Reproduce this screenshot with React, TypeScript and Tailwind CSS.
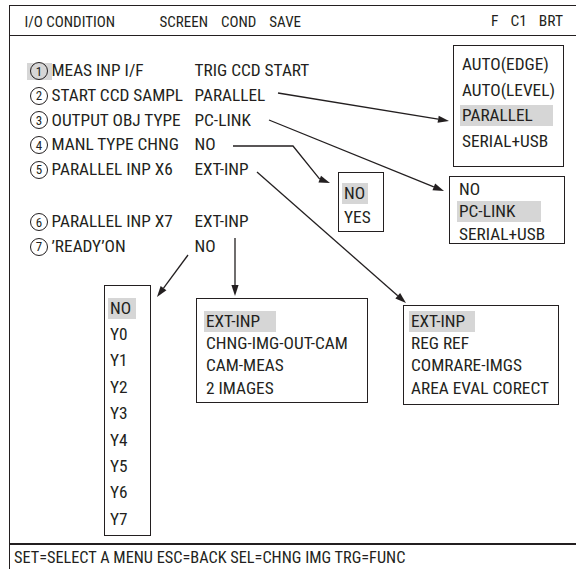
import React from "react";

type Opt = { text: string; on?: boolean };

const ROWS_TOP = [
  { n: "1", label: "MEAS INP I/F", value: "TRIG CCD START", mark: true },
  { n: "2", label: "START CCD SAMPL", value: "PARALLEL" },
  { n: "3", label: "OUTPUT OBJ TYPE", value: "PC-LINK" },
  { n: "4", label: "MANL TYPE CHNG", value: "NO" },
  { n: "5", label: "PARALLEL INP X6", value: "EXT-INP" },
];

const ROWS_BOTTOM = [
  { n: "6", label: "PARALLEL INP X7", value: "EXT-INP" },
  { n: "7", label: "’READY’ON", value: "NO" },
];

function Row({ n, label, value, mark }: { n: string; label: string; value: string; mark?: boolean }) {
  return (
    <div className="flex h-[24.6px] items-center">
      <span className={`flex h-[17px] w-[25px] items-center justify-center ${mark ? "bg-[#d6d6d6]" : ""}`}>
        <span className="flex h-[18px] w-[18px] items-center justify-center rounded-full border-[1.2px] border-[#231f20] text-[13px] leading-none">
          {n}
        </span>
      </span>
      <span className="w-[143px] whitespace-nowrap">{label}</span>
      <span className="whitespace-nowrap">{value}</span>
    </div>
  );
}

function Menu({
  items,
  className,
  rowH,
  hlW,
}: {
  items: Opt[];
  className: string;
  rowH: string;
  hlW: string;
}) {
  return (
    <div className={`absolute border-[1.5px] border-[#231f20] bg-white ${className}`}>
      {items.map((it) => (
        <div key={it.text} className={`flex items-center whitespace-nowrap ${rowH}`}>
          <span className={`px-[2px] leading-[21px] ${it.on ? `bg-[#d6d6d6] ${hlW}` : ""}`}>{it.text}</span>
        </div>
      ))}
    </div>
  );
}

function Arrow({ x1, y1, x2, y2, pts }: { x1: number; y1: number; x2: number; y2: number; pts?: string }) {
  const a = Math.atan2(y2 - y1, x2 - x1);
  const len = 11;
  const w = 3.6;
  const bx = x2 - len * Math.cos(a);
  const by = y2 - len * Math.sin(a);
  const p1 = `${bx + w * Math.sin(a)},${by - w * Math.cos(a)}`;
  const p2 = `${bx - w * Math.sin(a)},${by + w * Math.cos(a)}`;
  return (
    <g>
      <polyline
        points={pts ? `${pts} ${bx},${by}` : `${x1},${y1} ${bx},${by}`}
        fill="none"
        stroke="#231f20"
        strokeWidth="1.3"
      />
      <polygon points={`${x2},${y2} ${p1} ${p2}`} fill="#231f20" />
    </g>
  );
}

export default function App() {
  return (
    <div className="relative h-[569px] w-[576px] overflow-hidden bg-white pl-[9px] pt-[5px] font-['Roboto',sans-serif] text-[17.3px] text-[#231f20] [font-stretch:condensed]">
      <div className="flex h-[620px] w-[620px] flex-col border-l-[1.5px] border-t-[1.5px] border-[#231f20]">
        <div className="h-[30px] border-b-[1.2px] border-[#231f20] pt-[3px]">
          <div className="flex h-full w-[553px] items-center text-[15px]">
            <span className="ml-[14.5px] w-[135px]">I/O CONDITION</span>
            <span className="flex gap-[13px]">
              <span>SCREEN</span>
              <span>COND</span>
              <span>SAVE</span>
            </span>
            <span className="ml-auto flex gap-[12px] text-[15.5px]">
              <span>F</span>
              <span>C1</span>
              <span>BRT</span>
            </span>
          </div>
        </div>

        <div className="h-[507px] pl-[16.5px] pt-[23px]">
          {ROWS_TOP.map((r) => (
            <Row key={r.n} {...r} />
          ))}
          <div className="h-[28px]" />
          {ROWS_BOTTOM.map((r) => (
            <Row key={r.n} {...r} />
          ))}
        </div>

        <div className="flex h-[28px] items-center border-t-[2px] border-[#231f20] pl-[4px] text-[16.3px]">
          SET=SELECT A MENU ESC=BACK SEL=CHNG IMG TRG=FUNC
        </div>
      </div>

      <Menu
        className="left-[453px] top-[45px] h-[122px] w-[111px] pl-[6px] pt-[6px]"
        rowH="h-[25.6px]"
        hlW="w-[93px]"
        items={[{ text: "AUTO(EDGE)" }, { text: "AUTO(LEVEL)" }, { text: "PARALLEL", on: true }, { text: "SERIAL+USB" }]}
      />
      <Menu
        className="left-[449px] top-[176px] h-[68px] w-[116px] pl-[7px] pt-[1px]"
        rowH="h-[22.6px]"
        hlW="w-[84px]"
        items={[{ text: "NO" }, { text: "PC-LINK", on: true }, { text: "SERIAL+USB" }]}
      />
      <Menu
        className="left-[338px] top-[172px] h-[60px] w-[46px] pl-[3px] pt-[8px]"
        rowH="h-[24px]"
        hlW="w-[26px]"
        items={[{ text: "NO", on: true }, { text: "YES" }]}
      />
      <Menu
        className="left-[196px] top-[298px] h-[105px] w-[172px] pl-[7px] pt-[11px]"
        rowH="h-[22.4px]"
        hlW="w-[72px]"
        items={[{ text: "EXT-INP", on: true }, { text: "CHNG-IMG-OUT-CAM" }, { text: "CAM-MEAS" }, { text: "2 IMAGES" }]}
      />
      <Menu
        className="left-[403px] top-[305px] h-[100px] w-[156px] pl-[5px] pt-[4px]"
        rowH="h-[22.4px]"
        hlW="w-[66px]"
        items={[{ text: "EXT-INP", on: true }, { text: "REG REF" }, { text: "COMRARE-IMGS" }, { text: "AREA EVAL CORECT" }]}
      />
      <Menu
        className="left-[104px] top-[285px] h-[251px] w-[47px] pl-[3px] pt-[9px]"
        rowH="h-[26.4px]"
        hlW="w-[28px]"
        items={[
          { text: "NO", on: true },
          { text: "Y0" },
          { text: "Y1" },
          { text: "Y2" },
          { text: "Y3" },
          { text: "Y4" },
          { text: "Y5" },
          { text: "Y6" },
          { text: "Y7" },
        ]}
      />

      <svg className="pointer-events-none absolute left-0 top-0" width="576" height="569">
        <Arrow x1={278} y1={93} x2={449} y2={121} />
        <Arrow x1={269} y1={120} x2={444} y2={191} />
        <Arrow x1={233} y1={146} x2={330} y2={183} pts="233,146 293,146" />
        <Arrow x1={257} y1={172} x2={406} y2={303} />
        <Arrow x1={235} y1={238} x2={235} y2={296} />
        <Arrow x1={188} y1={255} x2={157} y2={297} />
      </svg>
    </div>
  );
}
